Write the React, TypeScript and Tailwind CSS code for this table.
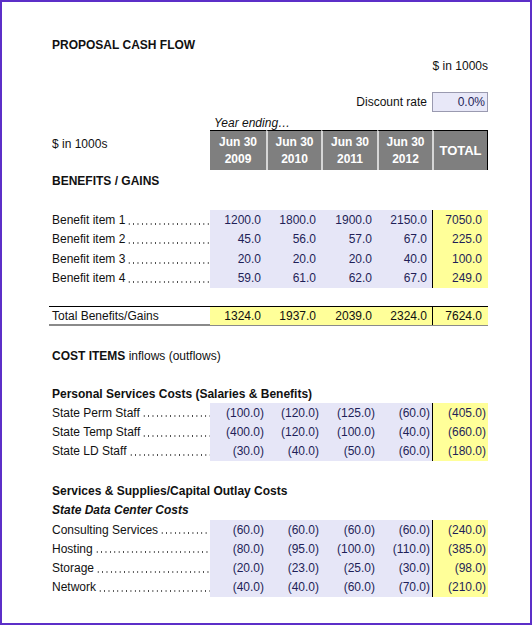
const fmt = (v: number) => (v < 0 ? `(${Math.abs(v).toFixed(1)})` : v.toFixed(1));

const cols = "grid grid-cols-[158px_56px_55px_56px_55px_56px]";

const Row = ({ label, values, h }: { label: string; values: number[]; h: string }) => (
  <div className={`${cols} ${h}`}>
    <div className="flex items-center whitespace-nowrap min-w-0">
      <span>{label}</span>
      {/* dot leader */}
      <span className="flex-1 self-end mb-[5px] ml-[2px] h-[2px] bg-[radial-gradient(circle,#444_0.6px,transparent_0.9px)] bg-[length:4.4px_2px] bg-repeat-x" />
    </div>
    {values.slice(0, 4).map((v, i) => (
      <div
        key={i}
        className={`flex items-center justify-end bg-[#e6e6f7] text-[#1f1f58] ${v < 0 ? "pr-[2px]" : "pr-[5px]"}`}
      >
        {fmt(v)}
      </div>
    ))}
    <div
      className={`flex items-center justify-end border-l border-black bg-[#ffff99] text-[#1f1f58] ${values[4] < 0 ? "pr-[2px]" : "pr-[6px]"}`}
    >
      {fmt(values[4])}
    </div>
  </div>
);

const benefits = [
  { label: "Benefit item 1", values: [1200, 1800, 1900, 2150, 7050] },
  { label: "Benefit item 2", values: [45, 56, 57, 67, 225] },
  { label: "Benefit item 3", values: [20, 20, 20, 40, 100] },
  { label: "Benefit item 4", values: [59, 61, 62, 67, 249] },
];

const personal = [
  { label: "State Perm Staff", values: [-100, -120, -125, -60, -405] },
  { label: "State Temp Staff", values: [-400, -120, -100, -40, -660] },
  { label: "State LD Staff", values: [-30, -40, -50, -60, -180] },
];

const dataCenter = [
  { label: "Consulting Services", values: [-60, -60, -60, -60, -240] },
  { label: "Hosting", values: [-80, -95, -100, -110, -385] },
  { label: "Storage", values: [-20, -23, -25, -30, -98] },
  { label: "Network", values: [-40, -40, -60, -70, -210] },
];

const years = ["2009", "2010", "2011", "2012"];

export default function App() {
  return (
    <div className="w-[532px] h-[625px] border-2 border-[#5c2fc8] bg-white pl-[50px] pt-[33px] text-[12px] text-[#111] font-['Liberation_Sans',Arial,sans-serif] overflow-hidden">
      <div className="w-[436px] flex flex-col">
        {/* Title */}
        <div className="h-[20px] flex items-center font-bold text-[12px]">PROPOSAL CASH FLOW</div>
        <div className="h-[22px] flex items-center justify-end">$ in 1000s</div>

        {/* Discount rate */}
        <div className={`${cols} h-[19px] mt-[15px]`}>
          <div className="col-span-5 flex items-center justify-end pr-[5px]">Discount rate</div>
          <div className="flex items-center justify-end pr-[2px] bg-[#e8e8f8] border border-[#9a9ab0] text-[#1f1f58]">0.0%</div>
        </div>

        {/* Year ending */}
        <div className={`${cols} h-[19px]`}>
          <div />
          <div className="col-span-5 pl-[4px] pt-[3px] italic whitespace-nowrap">Year ending…</div>
        </div>

        {/* Header */}
        <div className={`${cols} h-[40px]`}>
          <div className="pt-[5px]">$ in 1000s</div>
          {years.map((y, i) => (
            <div
              key={y}
              className={`flex flex-col items-center justify-center bg-[#7f7f7f] border-t border-black text-white font-bold leading-[17px] ${i > 0 ? "border-l-2 border-l-[#d6d6d6]" : ""}`}
            >
              <span>Jun 30</span>
              <span>{y}</span>
            </div>
          ))}
          <div className="flex items-center justify-center bg-[#7f7f7f] border-t border-r border-black border-l-2 border-l-[#d6d6d6] text-white font-bold text-[13px]">
            TOTAL
          </div>
        </div>

        <div className="h-[21px] flex items-center font-bold">BENEFITS / GAINS</div>

        <div className="mt-[19px]">
          {benefits.map((r) => (
            <Row key={r.label} label={r.label} values={r.values} h="h-[19.5px]" />
          ))}
        </div>

        {/* Total */}
        <div className={`${cols} mt-[18px] -ml-[3px] w-[439px] grid-cols-[161px_56px_55px_56px_55px_56px] h-[20px] border-t border-black border-b-2 border-b-[#8a8a8a]`}>
          <div className="pl-[3px] flex items-center">Total Benefits/Gains</div>
          {[1324, 1937, 2039, 2324].map((v) => (
            <div key={v} className="flex items-center justify-end pr-[5px] bg-[#ffff99]">
              {fmt(v)}
            </div>
          ))}
          <div className="flex items-center justify-end pr-[6px] bg-[#ffff99] border-l border-black">{fmt(7624)}</div>
        </div>

        <div className="h-[20px] mt-[20px] flex items-center">
          <span className="font-bold">COST ITEMS</span>&nbsp;inflows (outflows)
        </div>

        <div className="h-[19px] mt-[18px] flex items-center font-bold whitespace-nowrap">
          Personal Services Costs (Salaries &amp; Benefits)
        </div>
        {personal.map((r) => (
          <Row key={r.label} label={r.label} values={r.values} h="h-[19.3px]" />
        ))}

        <div className="h-[19px] mt-[21px] flex items-center font-bold whitespace-nowrap">
          Services &amp; Supplies/Capital Outlay Costs
        </div>
        <div className="h-[19px] flex items-center font-bold italic">State Data Center Costs</div>
        {dataCenter.map((r) => (
          <Row key={r.label} label={r.label} values={r.values} h="h-[19.3px]" />
        ))}
      </div>
    </div>
  );
}
